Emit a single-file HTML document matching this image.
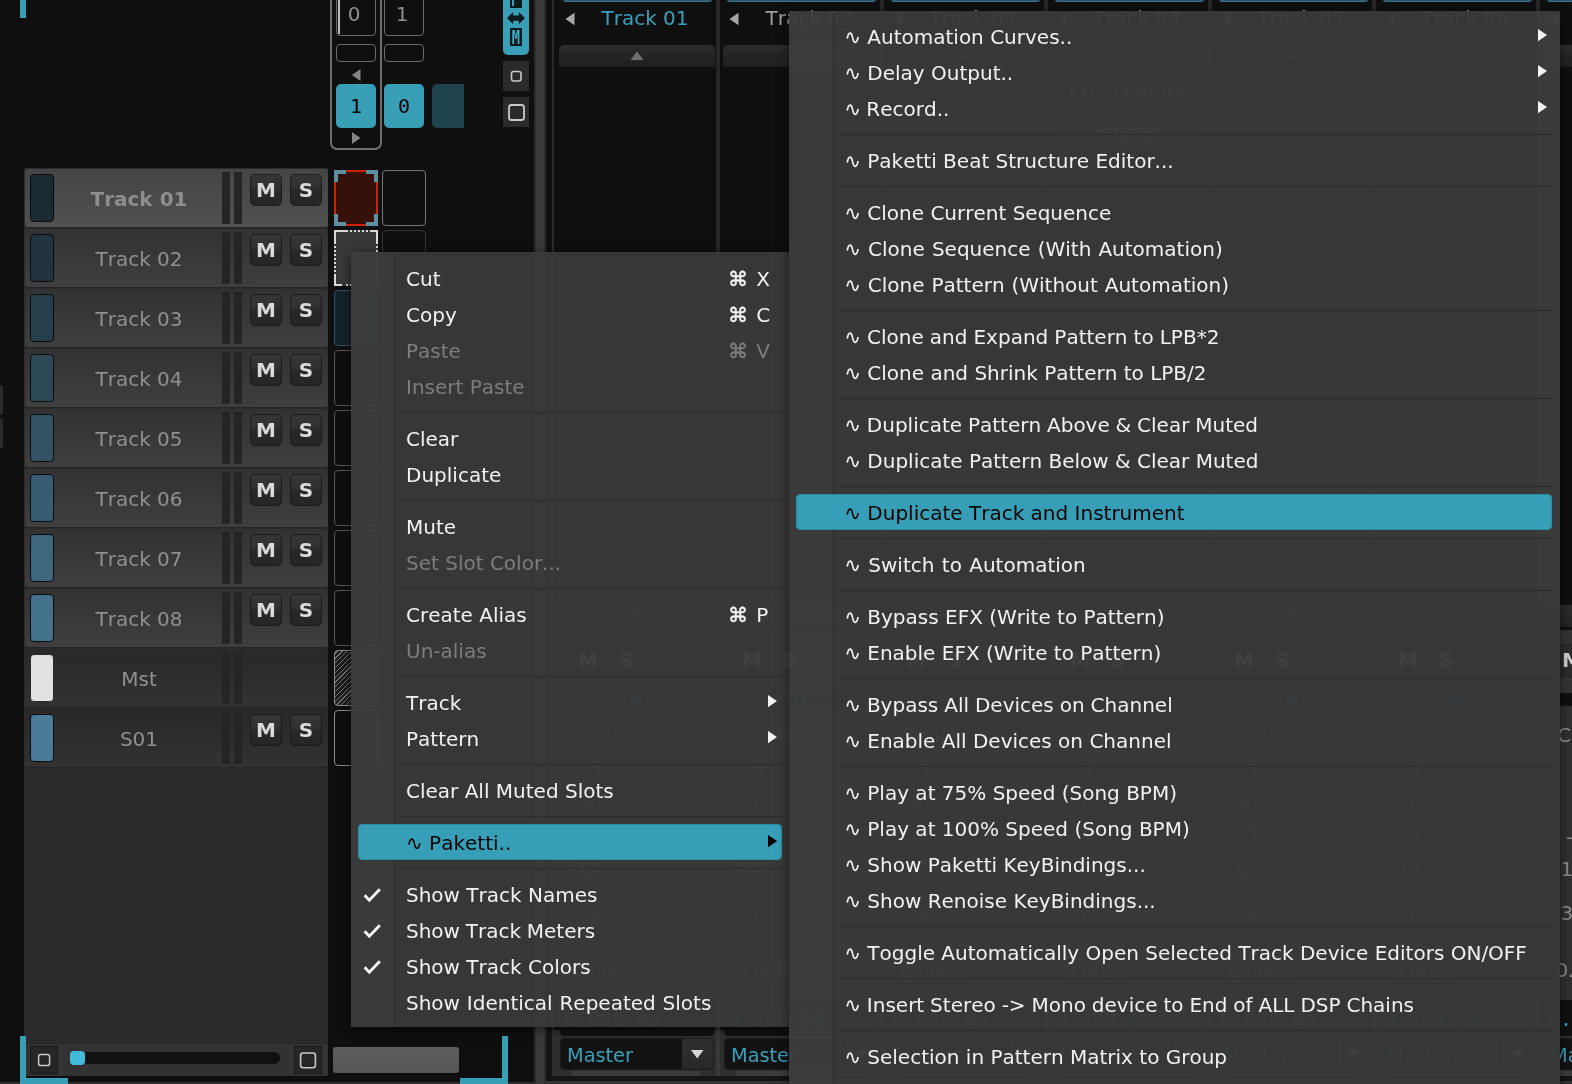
<!DOCTYPE html><html><head><meta charset="utf-8"><title>Renoise</title><style>
*{box-sizing:border-box}
html,body{margin:0;padding:0}
body{width:1572px;height:1084px;overflow:hidden;background:#0f0f0f;position:relative;
 font-family:"DejaVu Sans","Liberation Sans",sans-serif;font-size:20px;color:#eee;font-kerning:none}
.a{position:absolute}
.mono{font-family:"DejaVu Sans Mono","Liberation Mono",monospace}
.row{position:absolute;left:25px;width:303px;height:58px;border-radius:3px}
.row .sw{position:absolute;left:5px;top:5.4px;width:24px;height:48px;border:1px solid #0a0a0a;border-radius:4px}
.row .nm{position:absolute;left:30px;width:168px;top:12.4px;height:36px;line-height:36px;text-align:center;color:#909090;white-space:nowrap}
.row .mt{position:absolute;top:3.4px;width:8px;height:52px;background:repeating-linear-gradient(to bottom,#1f1f1f 0,#1f1f1f 1px,#2b2b2b 1px,#2b2b2b 2px)}
.btn{position:absolute;top:5.4px;width:32px;height:32px;border-radius:5px;border:1px solid #1b1b1b;
 background:linear-gradient(#363636,#2f2f2f 45%,#272727 55%,#272727);color:#dadada;font-weight:700;text-align:center;line-height:31px;font-size:20px}
.slot{position:absolute;width:44px;height:56px;border:1px solid #6a6a6a;border-radius:4px;background:#0f0f0f}
.menu{position:absolute;background:rgba(57,57,57,0.966);box-shadow:0 2px 10px rgba(0,0,0,.55)}
.menu .ic{position:absolute;left:0;top:0;bottom:0;background:rgba(255,255,255,0.02)}
.menu .vl{position:absolute;top:3px;bottom:3px;width:1px;background:#2b2b2b}
.mi{position:absolute;height:36px;line-height:36px;white-space:nowrap;color:#f2f2f2}
.mi.d{color:#7d7d7d}
.mi.h{color:#000}
.sep{position:absolute;height:1px;background:#2b2b2b}
.hl{position:absolute;height:35.6px;border-radius:4.5px;background:#369fb7;box-shadow:inset 0 0 0 1px rgba(0,30,40,0.14)}
.sc{position:absolute;height:36px;line-height:36px;white-space:nowrap;color:#f2f2f2;word-spacing:2px}
.sc b{font-weight:400;-webkit-text-stroke:0.45px currentColor}
.sc.d{color:#7d7d7d}
</style></head><body><div id="w" style="position:absolute;left:0;top:0;width:1572px;height:1084px;will-change:transform">
<div class="a" style="left:20px;top:0;width:6px;height:18px;background:#389fb6"></div>
<div class="a" style="left:0;top:385px;width:3px;height:30px;background:#2a2a2a;border-radius:0 2px 2px 0"></div>
<div class="a" style="left:0;top:418px;width:3px;height:30px;background:#2a2a2a;border-radius:0 2px 2px 0"></div>
<div class="a" style="left:330px;top:-10px;width:52px;height:160px;border:2px solid #6e6e6e;border-radius:7px"></div>
<div class="a" style="left:336px;top:-10px;width:40px;height:46px;border:1px solid #6a6a6a;border-radius:4px;color:#8f8f8f;text-align:center;line-height:46.5px;padding-right:4px">0</div>
<div class="a" style="left:336px;top:44px;width:40px;height:18px;border:1px solid #6a6a6a;border-radius:4px"></div>
<div class="a" style="left:384px;top:-10px;width:40px;height:46px;border:1px solid #6a6a6a;border-radius:4px;color:#8f8f8f;text-align:center;line-height:46.5px;padding-right:4px">1</div>
<div class="a" style="left:384px;top:44px;width:40px;height:18px;border:1px solid #6a6a6a;border-radius:4px"></div>
<div class="a" style="left:338px;top:0;width:2px;height:34px;background:#bdbdbd"></div>
<div class="a mono" style="left:336px;top:84px;width:40px;height:44px;border-radius:5px;background:#389fb6;color:#000;text-align:center;line-height:45px">1</div>
<div class="a mono" style="left:384px;top:84px;width:40px;height:44px;border-radius:5px;background:#389fb6;color:#000;text-align:center;line-height:45px">0</div>
<div class="a" style="left:432px;top:84px;width:32px;height:44px;border-radius:5px 0 0 5px;background:#1e434d"></div>
<div class="a" style="left:503px;top:-6px;width:26px;height:61px;border-radius:5px;background:#389fb6"></div>
<div class="a" style="left:510px;top:0;width:12px;height:8px;background:#09191d"></div>
<div class="a" style="left:512px;top:0;width:2px;height:6px;background:#389fb6"></div>
<div class="a" style="left:510px;top:28px;width:12px;height:18px;background:#09191d"></div>
<div class="a mono" style="left:510px;top:28px;width:12px;height:18px;color:#3fb0c8;font-size:19px;font-weight:700;line-height:18px;text-align:center;transform:scaleX(.72);">M</div>
<div class="a" style="left:503px;top:61px;width:26px;height:30px;background:#2b2b2b"></div>
<div class="a" style="left:503px;top:97px;width:26px;height:30px;background:#2b2b2b"></div>
<div class="a" style="left:534px;top:0;width:12px;height:1084px;background:linear-gradient(to right,#2c2c2c 0,#2c2c2c 2px,#3b3b3b 2px,#393939 10px,#2c2c2c 10px)"></div>
<div class="a" style="left:24px;top:168px;width:304px;height:908px;background:#2b2b2b"></div>
<div class="row" style="top:168.6px;background:linear-gradient(#454545,#4a4a4a 50%,#515151);box-shadow:0 1px 0 #242424">
<div class="sw" style="background:#1c2b33"></div>
<div class="nm" style="font-weight:700;color:#8e8e8e">Track 01</div>
<div class="mt" style="left:197px"></div><div class="mt" style="left:209px"></div>
<div class="btn" style="left:225px">M</div><div class="btn" style="left:265px">S</div>
</div>
<div class="row" style="top:228.6px;background:linear-gradient(#323232,#383838 50%,#3f3f3f);box-shadow:0 1px 0 #242424">
<div class="sw" style="background:#22343f"></div>
<div class="nm" style="">Track 02</div>
<div class="mt" style="left:197px"></div><div class="mt" style="left:209px"></div>
<div class="btn" style="left:225px">M</div><div class="btn" style="left:265px">S</div>
</div>
<div class="row" style="top:288.6px;background:linear-gradient(#323232,#383838 50%,#3f3f3f);box-shadow:0 1px 0 #242424">
<div class="sw" style="background:#273e4b"></div>
<div class="nm" style="">Track 03</div>
<div class="mt" style="left:197px"></div><div class="mt" style="left:209px"></div>
<div class="btn" style="left:225px">M</div><div class="btn" style="left:265px">S</div>
</div>
<div class="row" style="top:348.6px;background:linear-gradient(#323232,#383838 50%,#3f3f3f);box-shadow:0 1px 0 #242424">
<div class="sw" style="background:#2d4857"></div>
<div class="nm" style="">Track 04</div>
<div class="mt" style="left:197px"></div><div class="mt" style="left:209px"></div>
<div class="btn" style="left:225px">M</div><div class="btn" style="left:265px">S</div>
</div>
<div class="row" style="top:408.6px;background:linear-gradient(#323232,#383838 50%,#3f3f3f);box-shadow:0 1px 0 #242424">
<div class="sw" style="background:#335365"></div>
<div class="nm" style="">Track 05</div>
<div class="mt" style="left:197px"></div><div class="mt" style="left:209px"></div>
<div class="btn" style="left:225px">M</div><div class="btn" style="left:265px">S</div>
</div>
<div class="row" style="top:468.6px;background:linear-gradient(#323232,#383838 50%,#3f3f3f);box-shadow:0 1px 0 #242424">
<div class="sw" style="background:#385d72"></div>
<div class="nm" style="">Track 06</div>
<div class="mt" style="left:197px"></div><div class="mt" style="left:209px"></div>
<div class="btn" style="left:225px">M</div><div class="btn" style="left:265px">S</div>
</div>
<div class="row" style="top:528.6px;background:linear-gradient(#323232,#383838 50%,#3f3f3f);box-shadow:0 1px 0 #242424">
<div class="sw" style="background:#3e677f"></div>
<div class="nm" style="">Track 07</div>
<div class="mt" style="left:197px"></div><div class="mt" style="left:209px"></div>
<div class="btn" style="left:225px">M</div><div class="btn" style="left:265px">S</div>
</div>
<div class="row" style="top:588.6px;background:linear-gradient(#323232,#383838 50%,#3f3f3f);box-shadow:0 1px 0 #242424">
<div class="sw" style="background:#44718b"></div>
<div class="nm" style="">Track 08</div>
<div class="mt" style="left:197px"></div><div class="mt" style="left:209px"></div>
<div class="btn" style="left:225px">M</div><div class="btn" style="left:265px">S</div>
</div>
<div class="row" style="top:648.6px;background:linear-gradient(#292929,#2d2d2d 50%,#323232);box-shadow:0 1px 0 #242424">
<div class="sw" style="background:#e2e2e2;border-color:#2a2a2a"></div>
<div class="nm" style="">Mst</div>
<div class="mt" style="left:197px"></div><div class="mt" style="left:209px"></div>
</div>
<div class="row" style="top:708.6px;background:linear-gradient(#292929,#2d2d2d 50%,#323232);box-shadow:0 1px 0 #242424">
<div class="sw" style="background:#4a7c9a"></div>
<div class="nm" style="">S01</div>
<div class="mt" style="left:197px"></div><div class="mt" style="left:209px"></div>
<div class="btn" style="left:225px">M</div><div class="btn" style="left:265px">S</div>
</div>
<div class="a" style="left:24px;top:1044px;width:304px;height:32px;background:#323232"></div>
<div class="a" style="left:30px;top:1046px;width:28px;height:28px;background:#262626;border:1px solid #1a1a1a"></div>
<div class="a" style="left:294px;top:1046px;width:28px;height:28px;background:#262626;border:1px solid #1a1a1a"></div>
<div class="a" style="left:70px;top:1052px;width:210px;height:12px;border-radius:6px;background:#111"></div>
<div class="a" style="left:70px;top:1051px;width:15px;height:14px;border-radius:4px;background:#41bcd8"></div>
<div class="a" style="left:333px;top:1047px;width:126px;height:26px;border-radius:3px;background:linear-gradient(#5f5f5f,#555)"></div>
<div class="a" style="left:20px;top:1036px;width:6px;height:48px;background:#389fb6"></div>
<div class="a" style="left:20px;top:1078px;width:48px;height:6px;background:#389fb6"></div>
<div class="a" style="left:502px;top:1036px;width:6px;height:48px;background:#389fb6"></div>
<div class="a" style="left:460px;top:1078px;width:48px;height:6px;background:#389fb6"></div>
<div class="a" style="left:334px;top:170px;width:44px;height:56px;background:#36110a;border:2px solid #cc2200"></div>
<div class="a" style="left:334px;top:230px;width:44px;height:56px;background:#383838"></div>
<div class="slot" style="left:334px;top:290px;background:#13232c;border-color:#35505e"></div>
<div class="slot" style="left:334px;top:350px;border-color:#555"></div>
<div class="slot" style="left:334px;top:410px;border-color:#555"></div>
<div class="slot" style="left:334px;top:470px;border-color:#555"></div>
<div class="slot" style="left:334px;top:530px;border-color:#555"></div>
<div class="slot" style="left:334px;top:590px;border-color:#555"></div>
<div class="slot" style="left:334px;top:650px;border-color:#8a8a8a;background:repeating-linear-gradient(135deg,#1c1c1c 0,#1c1c1c 1.4px,#707070 1.4px,#707070 2.3px,#1c1c1c 2.3px,#1c1c1c 3.4px)"></div>
<div class="slot" style="left:334px;top:710px;border-color:#8a8a8a"></div>
<div class="slot" style="left:382px;top:170px;border-color:#777"></div>
<div class="slot" style="left:382px;top:230px;border-color:#333"></div>
<div class="a" style="left:0;top:1082px;width:534px;height:2px;background:#2c2c2c"></div>
<div class="a" style="left:20px;top:1078px;width:48px;height:6px;background:#389fb6"></div>
<div class="a" style="left:460px;top:1078px;width:48px;height:6px;background:#389fb6"></div>
<div class="a" style="left:552px;top:0;width:2px;height:1076px;background:#2a2a2a"></div>
<div class="a" style="left:546px;top:1030px;width:1026px;height:51px;background:#151515;border-radius:0 0 0 8px"></div>
<div class="a" style="left:546px;top:1081px;width:1026px;height:3px;background:#333"></div>
<div class="a" style="left:552px;top:1030px;width:1020px;height:46px;background:#2e2e2e"></div>
<div class="a" style="left:716px;top:0;width:4px;height:605px;background:#272727"></div>
<div class="a" style="left:716px;top:605px;width:4px;height:471px;background:#383838"></div>
<div class="a" style="left:563px;top:-2px;width:149px;height:4px;background:#2d566d;border-bottom:1px solid #3f7391;border-radius:0 0 3px 3px"></div>
<div class="a" style="left:574px;top:0;width:142px;height:36px;line-height:36px;text-align:center;color:#3aa0ba;white-space:nowrap">Track 01</div>
<div class="a" style="left:559px;top:45px;width:156px;height:22px;border-radius:5px 5px 0 0;background:linear-gradient(#2d2d2d,#262626 40%,#1f1f1f)"></div>
<div class="a" style="left:552px;top:605px;width:164px;height:22px;background:linear-gradient(#2c2c2c,#222)"></div>
<div class="a" style="left:552px;top:630px;width:164px;height:76px;background:#333"></div>
<div class="a" style="left:552px;top:706px;width:164px;height:294px;background:#303030"></div>
<div class="a" style="left:572px;top:644px;width:34px;height:33px;background:#2c2c2c;border:1px solid #242424;color:#cfcfcf;font-weight:700;text-align:center;line-height:31px;text-indent:-2px">M</div>
<div class="a" style="left:610px;top:644px;width:34px;height:33px;background:#2c2c2c;border:1px solid #242424;color:#cfcfcf;font-weight:700;text-align:center;line-height:31px;text-indent:-2px">S</div>
<div class="a" style="left:572px;top:693px;width:132px;height:13px;background:#0f0f0f;border-radius:3px"></div>
<div class="a" style="left:629.5px;top:692.5px;width:13.5px;height:14px;border-radius:4px;background:#1e434d"></div>
<div class="a" style="left:573px;top:717px;height:36px;line-height:36px;color:#8a8a8a">Center</div>
<div class="a" style="left:674px;top:723px;width:19px;height:18px;border:1px solid #262626;border-radius:3px;background:#2b2b2b"></div>
<div class="a" style="left:532px;top:755px;width:70px;text-align:right;height:36px;line-height:36px;color:#888">3</div>
<div class="a" style="left:532px;top:788px;width:70px;text-align:right;height:36px;line-height:36px;color:#888">0</div>
<div class="a" style="left:532px;top:819px;width:70px;text-align:right;height:36px;line-height:36px;color:#888">-3</div>
<div class="a" style="left:532px;top:851px;width:70px;text-align:right;height:36px;line-height:36px;color:#888">-12</div>
<div class="a" style="left:532px;top:895px;width:70px;text-align:right;height:36px;line-height:36px;color:#888">-36</div>
<div class="a" style="left:571.5px;top:952px;height:36px;line-height:36px;color:#888;letter-spacing:-0.8px">0.000..</div>
<div class="a" style="left:617px;top:765px;width:9px;height:180px;background:#262626"></div>
<div class="a" style="left:560px;top:1003px;width:154px;height:33px;border-radius:4px;background:#111"></div>
<div class="a mono" style="left:564px;top:1001px;height:36px;line-height:36px;color:#3aa0ba">0.000 ms</div>
<div class="a" style="left:560px;top:1038px;width:154px;height:32px;border-radius:4px;background:#121212;border:1px solid #1c1c1c;overflow:hidden"><div class="a" style="left:121px;top:0;width:32px;height:32px;background:linear-gradient(#303030,#282828)"></div><div class="a" style="left:6px;top:-1.5px;height:36px;line-height:36px;color:#3aa0ba;font-size:19.3px">Master</div></div>
<div class="a" style="left:572px;top:1071px;width:128px;height:5px;background:#3c3c3c"></div>
<div class="a" style="left:880px;top:0;width:4px;height:605px;background:#272727"></div>
<div class="a" style="left:880px;top:605px;width:4px;height:471px;background:#383838"></div>
<div class="a" style="left:727px;top:-2px;width:149px;height:4px;background:#2d566d;border-bottom:1px solid #3f7391;border-radius:0 0 3px 3px"></div>
<div class="a" style="left:738px;top:0;width:142px;height:36px;line-height:36px;text-align:center;color:#9c9c9c;white-space:nowrap">Track 02</div>
<div class="a" style="left:723px;top:45px;width:156px;height:22px;border-radius:5px 5px 0 0;background:linear-gradient(#2d2d2d,#262626 40%,#1f1f1f)"></div>
<div class="a" style="left:716px;top:605px;width:164px;height:22px;background:linear-gradient(#2c2c2c,#222)"></div>
<div class="a" style="left:716px;top:630px;width:164px;height:76px;background:#333"></div>
<div class="a" style="left:716px;top:706px;width:164px;height:294px;background:#303030"></div>
<div class="a" style="left:736px;top:644px;width:34px;height:33px;background:#2c2c2c;border:1px solid #242424;color:#cfcfcf;font-weight:700;text-align:center;line-height:31px;text-indent:-2px">M</div>
<div class="a" style="left:774px;top:644px;width:34px;height:33px;background:#2c2c2c;border:1px solid #242424;color:#cfcfcf;font-weight:700;text-align:center;line-height:31px;text-indent:-2px">S</div>
<div class="a" style="left:736px;top:693px;width:132px;height:13px;background:#0f0f0f;border-radius:3px"></div>
<div class="a" style="left:793.5px;top:692.5px;width:13.5px;height:14px;border-radius:4px;background:#1e434d"></div>
<div class="a" style="left:737px;top:717px;height:36px;line-height:36px;color:#8a8a8a">Center</div>
<div class="a" style="left:838px;top:723px;width:19px;height:18px;border:1px solid #262626;border-radius:3px;background:#2b2b2b"></div>
<div class="a" style="left:696px;top:755px;width:70px;text-align:right;height:36px;line-height:36px;color:#888">3</div>
<div class="a" style="left:696px;top:788px;width:70px;text-align:right;height:36px;line-height:36px;color:#888">0</div>
<div class="a" style="left:696px;top:819px;width:70px;text-align:right;height:36px;line-height:36px;color:#888">-3</div>
<div class="a" style="left:696px;top:851px;width:70px;text-align:right;height:36px;line-height:36px;color:#888">-12</div>
<div class="a" style="left:696px;top:895px;width:70px;text-align:right;height:36px;line-height:36px;color:#888">-36</div>
<div class="a" style="left:735.5px;top:952px;height:36px;line-height:36px;color:#888;letter-spacing:-0.8px">0.000..</div>
<div class="a" style="left:781px;top:765px;width:9px;height:180px;background:#262626"></div>
<div class="a" style="left:724px;top:1003px;width:154px;height:33px;border-radius:4px;background:#111"></div>
<div class="a mono" style="left:728px;top:1001px;height:36px;line-height:36px;color:#3aa0ba">0.000 ms</div>
<div class="a" style="left:724px;top:1038px;width:154px;height:32px;border-radius:4px;background:#121212;border:1px solid #1c1c1c;overflow:hidden"><div class="a" style="left:121px;top:0;width:32px;height:32px;background:linear-gradient(#303030,#282828)"></div><div class="a" style="left:6px;top:-1.5px;height:36px;line-height:36px;color:#3aa0ba;font-size:19.3px">Master</div></div>
<div class="a" style="left:736px;top:1071px;width:128px;height:5px;background:#3c3c3c"></div>
<div class="a" style="left:1044px;top:0;width:4px;height:605px;background:#272727"></div>
<div class="a" style="left:1044px;top:605px;width:4px;height:471px;background:#383838"></div>
<div class="a" style="left:891px;top:-2px;width:149px;height:4px;background:#2d566d;border-bottom:1px solid #3f7391;border-radius:0 0 3px 3px"></div>
<div class="a" style="left:902px;top:0;width:142px;height:36px;line-height:36px;text-align:center;color:#9c9c9c;white-space:nowrap">Track 03</div>
<div class="a" style="left:887px;top:45px;width:156px;height:22px;border-radius:5px 5px 0 0;background:linear-gradient(#2d2d2d,#262626 40%,#1f1f1f)"></div>
<div class="a" style="left:880px;top:605px;width:164px;height:22px;background:linear-gradient(#2c2c2c,#222)"></div>
<div class="a" style="left:880px;top:630px;width:164px;height:76px;background:#333"></div>
<div class="a" style="left:880px;top:706px;width:164px;height:294px;background:#303030"></div>
<div class="a" style="left:900px;top:644px;width:34px;height:33px;background:#2c2c2c;border:1px solid #242424;color:#cfcfcf;font-weight:700;text-align:center;line-height:31px;text-indent:-2px">M</div>
<div class="a" style="left:938px;top:644px;width:34px;height:33px;background:#2c2c2c;border:1px solid #242424;color:#cfcfcf;font-weight:700;text-align:center;line-height:31px;text-indent:-2px">S</div>
<div class="a" style="left:900px;top:693px;width:132px;height:13px;background:#0f0f0f;border-radius:3px"></div>
<div class="a" style="left:957.5px;top:692.5px;width:13.5px;height:14px;border-radius:4px;background:#1e434d"></div>
<div class="a" style="left:901px;top:717px;height:36px;line-height:36px;color:#8a8a8a">Center</div>
<div class="a" style="left:1002px;top:723px;width:19px;height:18px;border:1px solid #262626;border-radius:3px;background:#2b2b2b"></div>
<div class="a" style="left:860px;top:755px;width:70px;text-align:right;height:36px;line-height:36px;color:#888">3</div>
<div class="a" style="left:860px;top:788px;width:70px;text-align:right;height:36px;line-height:36px;color:#888">0</div>
<div class="a" style="left:860px;top:819px;width:70px;text-align:right;height:36px;line-height:36px;color:#888">-3</div>
<div class="a" style="left:860px;top:851px;width:70px;text-align:right;height:36px;line-height:36px;color:#888">-12</div>
<div class="a" style="left:860px;top:895px;width:70px;text-align:right;height:36px;line-height:36px;color:#888">-36</div>
<div class="a" style="left:899.5px;top:952px;height:36px;line-height:36px;color:#888;letter-spacing:-0.8px">0.000..</div>
<div class="a" style="left:945px;top:765px;width:9px;height:180px;background:#262626"></div>
<div class="a" style="left:888px;top:1003px;width:154px;height:33px;border-radius:4px;background:#111"></div>
<div class="a mono" style="left:892px;top:1001px;height:36px;line-height:36px;color:#3aa0ba">0.000 ms</div>
<div class="a" style="left:888px;top:1038px;width:154px;height:32px;border-radius:4px;background:#121212;border:1px solid #1c1c1c;overflow:hidden"><div class="a" style="left:121px;top:0;width:32px;height:32px;background:linear-gradient(#303030,#282828)"></div><div class="a" style="left:6px;top:-1.5px;height:36px;line-height:36px;color:#3aa0ba;font-size:19.3px">Master</div></div>
<div class="a" style="left:900px;top:1071px;width:128px;height:5px;background:#3c3c3c"></div>
<div class="a" style="left:1208px;top:0;width:4px;height:605px;background:#272727"></div>
<div class="a" style="left:1208px;top:605px;width:4px;height:471px;background:#383838"></div>
<div class="a" style="left:1055px;top:-2px;width:149px;height:4px;background:#2d566d;border-bottom:1px solid #3f7391;border-radius:0 0 3px 3px"></div>
<div class="a" style="left:1066px;top:0;width:142px;height:36px;line-height:36px;text-align:center;color:#9c9c9c;white-space:nowrap">Track 04</div>
<div class="a" style="left:1051px;top:45px;width:156px;height:22px;border-radius:5px 5px 0 0;background:linear-gradient(#2d2d2d,#262626 40%,#1f1f1f)"></div>
<div class="a" style="left:1044px;top:605px;width:164px;height:22px;background:linear-gradient(#2c2c2c,#222)"></div>
<div class="a" style="left:1044px;top:630px;width:164px;height:76px;background:#333"></div>
<div class="a" style="left:1044px;top:706px;width:164px;height:294px;background:#303030"></div>
<div class="a" style="left:1064px;top:644px;width:34px;height:33px;background:#2c2c2c;border:1px solid #242424;color:#cfcfcf;font-weight:700;text-align:center;line-height:31px;text-indent:-2px">M</div>
<div class="a" style="left:1102px;top:644px;width:34px;height:33px;background:#2c2c2c;border:1px solid #242424;color:#cfcfcf;font-weight:700;text-align:center;line-height:31px;text-indent:-2px">S</div>
<div class="a" style="left:1064px;top:693px;width:132px;height:13px;background:#0f0f0f;border-radius:3px"></div>
<div class="a" style="left:1121.5px;top:692.5px;width:13.5px;height:14px;border-radius:4px;background:#1e434d"></div>
<div class="a" style="left:1065px;top:717px;height:36px;line-height:36px;color:#8a8a8a">Center</div>
<div class="a" style="left:1166px;top:723px;width:19px;height:18px;border:1px solid #262626;border-radius:3px;background:#2b2b2b"></div>
<div class="a" style="left:1024px;top:755px;width:70px;text-align:right;height:36px;line-height:36px;color:#888">3</div>
<div class="a" style="left:1024px;top:788px;width:70px;text-align:right;height:36px;line-height:36px;color:#888">0</div>
<div class="a" style="left:1024px;top:819px;width:70px;text-align:right;height:36px;line-height:36px;color:#888">-3</div>
<div class="a" style="left:1024px;top:851px;width:70px;text-align:right;height:36px;line-height:36px;color:#888">-12</div>
<div class="a" style="left:1024px;top:895px;width:70px;text-align:right;height:36px;line-height:36px;color:#888">-36</div>
<div class="a" style="left:1063.5px;top:952px;height:36px;line-height:36px;color:#888;letter-spacing:-0.8px">0.000..</div>
<div class="a" style="left:1109px;top:765px;width:9px;height:180px;background:#262626"></div>
<div class="a" style="left:1052px;top:1003px;width:154px;height:33px;border-radius:4px;background:#111"></div>
<div class="a mono" style="left:1056px;top:1001px;height:36px;line-height:36px;color:#3aa0ba">0.000 ms</div>
<div class="a" style="left:1052px;top:1038px;width:154px;height:32px;border-radius:4px;background:#121212;border:1px solid #1c1c1c;overflow:hidden"><div class="a" style="left:121px;top:0;width:32px;height:32px;background:linear-gradient(#303030,#282828)"></div><div class="a" style="left:6px;top:-1.5px;height:36px;line-height:36px;color:#3aa0ba;font-size:19.3px">Master</div></div>
<div class="a" style="left:1064px;top:1071px;width:128px;height:5px;background:#3c3c3c"></div>
<div class="a" style="left:1372px;top:0;width:4px;height:605px;background:#272727"></div>
<div class="a" style="left:1372px;top:605px;width:4px;height:471px;background:#383838"></div>
<div class="a" style="left:1219px;top:-2px;width:149px;height:4px;background:#2d566d;border-bottom:1px solid #3f7391;border-radius:0 0 3px 3px"></div>
<div class="a" style="left:1230px;top:0;width:142px;height:36px;line-height:36px;text-align:center;color:#9c9c9c;white-space:nowrap">Track 05</div>
<div class="a" style="left:1215px;top:45px;width:156px;height:22px;border-radius:5px 5px 0 0;background:linear-gradient(#2d2d2d,#262626 40%,#1f1f1f)"></div>
<div class="a" style="left:1208px;top:605px;width:164px;height:22px;background:linear-gradient(#2c2c2c,#222)"></div>
<div class="a" style="left:1208px;top:630px;width:164px;height:76px;background:#333"></div>
<div class="a" style="left:1208px;top:706px;width:164px;height:294px;background:#303030"></div>
<div class="a" style="left:1228px;top:644px;width:34px;height:33px;background:#2c2c2c;border:1px solid #242424;color:#cfcfcf;font-weight:700;text-align:center;line-height:31px;text-indent:-2px">M</div>
<div class="a" style="left:1266px;top:644px;width:34px;height:33px;background:#2c2c2c;border:1px solid #242424;color:#cfcfcf;font-weight:700;text-align:center;line-height:31px;text-indent:-2px">S</div>
<div class="a" style="left:1228px;top:693px;width:132px;height:13px;background:#0f0f0f;border-radius:3px"></div>
<div class="a" style="left:1285.5px;top:692.5px;width:13.5px;height:14px;border-radius:4px;background:#1e434d"></div>
<div class="a" style="left:1229px;top:717px;height:36px;line-height:36px;color:#8a8a8a">Center</div>
<div class="a" style="left:1330px;top:723px;width:19px;height:18px;border:1px solid #262626;border-radius:3px;background:#2b2b2b"></div>
<div class="a" style="left:1188px;top:755px;width:70px;text-align:right;height:36px;line-height:36px;color:#888">3</div>
<div class="a" style="left:1188px;top:788px;width:70px;text-align:right;height:36px;line-height:36px;color:#888">0</div>
<div class="a" style="left:1188px;top:819px;width:70px;text-align:right;height:36px;line-height:36px;color:#888">-3</div>
<div class="a" style="left:1188px;top:851px;width:70px;text-align:right;height:36px;line-height:36px;color:#888">-12</div>
<div class="a" style="left:1188px;top:895px;width:70px;text-align:right;height:36px;line-height:36px;color:#888">-36</div>
<div class="a" style="left:1227.5px;top:952px;height:36px;line-height:36px;color:#888;letter-spacing:-0.8px">0.000..</div>
<div class="a" style="left:1273px;top:765px;width:9px;height:180px;background:#262626"></div>
<div class="a" style="left:1216px;top:1003px;width:154px;height:33px;border-radius:4px;background:#111"></div>
<div class="a mono" style="left:1220px;top:1001px;height:36px;line-height:36px;color:#3aa0ba">0.000 ms</div>
<div class="a" style="left:1216px;top:1038px;width:154px;height:32px;border-radius:4px;background:#121212;border:1px solid #1c1c1c;overflow:hidden"><div class="a" style="left:121px;top:0;width:32px;height:32px;background:linear-gradient(#303030,#282828)"></div><div class="a" style="left:6px;top:-1.5px;height:36px;line-height:36px;color:#3aa0ba;font-size:19.3px">Master</div></div>
<div class="a" style="left:1228px;top:1071px;width:128px;height:5px;background:#3c3c3c"></div>
<div class="a" style="left:1536px;top:0;width:4px;height:605px;background:#272727"></div>
<div class="a" style="left:1536px;top:605px;width:4px;height:471px;background:#383838"></div>
<div class="a" style="left:1383px;top:-2px;width:149px;height:4px;background:#2d566d;border-bottom:1px solid #3f7391;border-radius:0 0 3px 3px"></div>
<div class="a" style="left:1394px;top:0;width:142px;height:36px;line-height:36px;text-align:center;color:#9c9c9c;white-space:nowrap">Track 06</div>
<div class="a" style="left:1379px;top:45px;width:156px;height:22px;border-radius:5px 5px 0 0;background:linear-gradient(#2d2d2d,#262626 40%,#1f1f1f)"></div>
<div class="a" style="left:1372px;top:605px;width:164px;height:22px;background:linear-gradient(#2c2c2c,#222)"></div>
<div class="a" style="left:1372px;top:630px;width:164px;height:76px;background:#333"></div>
<div class="a" style="left:1372px;top:706px;width:164px;height:294px;background:#303030"></div>
<div class="a" style="left:1392px;top:644px;width:34px;height:33px;background:#2c2c2c;border:1px solid #242424;color:#cfcfcf;font-weight:700;text-align:center;line-height:31px;text-indent:-2px">M</div>
<div class="a" style="left:1430px;top:644px;width:34px;height:33px;background:#2c2c2c;border:1px solid #242424;color:#cfcfcf;font-weight:700;text-align:center;line-height:31px;text-indent:-2px">S</div>
<div class="a" style="left:1392px;top:693px;width:132px;height:13px;background:#0f0f0f;border-radius:3px"></div>
<div class="a" style="left:1449.5px;top:692.5px;width:13.5px;height:14px;border-radius:4px;background:#1e434d"></div>
<div class="a" style="left:1393px;top:717px;height:36px;line-height:36px;color:#8a8a8a">Center</div>
<div class="a" style="left:1494px;top:723px;width:19px;height:18px;border:1px solid #262626;border-radius:3px;background:#2b2b2b"></div>
<div class="a" style="left:1352px;top:755px;width:70px;text-align:right;height:36px;line-height:36px;color:#888">3</div>
<div class="a" style="left:1352px;top:788px;width:70px;text-align:right;height:36px;line-height:36px;color:#888">0</div>
<div class="a" style="left:1352px;top:819px;width:70px;text-align:right;height:36px;line-height:36px;color:#888">-3</div>
<div class="a" style="left:1352px;top:851px;width:70px;text-align:right;height:36px;line-height:36px;color:#888">-12</div>
<div class="a" style="left:1352px;top:895px;width:70px;text-align:right;height:36px;line-height:36px;color:#888">-36</div>
<div class="a" style="left:1391.5px;top:952px;height:36px;line-height:36px;color:#888;letter-spacing:-0.8px">0.000..</div>
<div class="a" style="left:1437px;top:765px;width:9px;height:180px;background:#262626"></div>
<div class="a" style="left:1380px;top:1003px;width:154px;height:33px;border-radius:4px;background:#111"></div>
<div class="a mono" style="left:1384px;top:1001px;height:36px;line-height:36px;color:#3aa0ba">0.000 ms</div>
<div class="a" style="left:1380px;top:1038px;width:154px;height:32px;border-radius:4px;background:#121212;border:1px solid #1c1c1c;overflow:hidden"><div class="a" style="left:121px;top:0;width:32px;height:32px;background:linear-gradient(#303030,#282828)"></div><div class="a" style="left:6px;top:-1.5px;height:36px;line-height:36px;color:#3aa0ba;font-size:19.3px">Master</div></div>
<div class="a" style="left:1392px;top:1071px;width:128px;height:5px;background:#3c3c3c"></div>
<div class="a" style="left:1700px;top:0;width:4px;height:605px;background:#272727"></div>
<div class="a" style="left:1700px;top:605px;width:4px;height:471px;background:#383838"></div>
<div class="a" style="left:1547px;top:-2px;width:149px;height:4px;background:#2d566d;border-bottom:1px solid #3f7391;border-radius:0 0 3px 3px"></div>
<div class="a" style="left:1558px;top:0;width:142px;height:36px;line-height:36px;text-align:center;color:#9c9c9c;white-space:nowrap">Track 07</div>
<div class="a" style="left:1543px;top:45px;width:156px;height:22px;border-radius:5px 5px 0 0;background:linear-gradient(#2d2d2d,#262626 40%,#1f1f1f)"></div>
<div class="a" style="left:1536px;top:605px;width:164px;height:22px;background:linear-gradient(#2c2c2c,#222)"></div>
<div class="a" style="left:1536px;top:630px;width:164px;height:76px;background:#333"></div>
<div class="a" style="left:1536px;top:706px;width:164px;height:294px;background:#303030"></div>
<div class="a" style="left:1556px;top:644px;width:34px;height:33px;background:#2c2c2c;border:1px solid #242424;color:#cfcfcf;font-weight:700;text-align:center;line-height:31px;text-indent:-2px">M</div>
<div class="a" style="left:1594px;top:644px;width:34px;height:33px;background:#2c2c2c;border:1px solid #242424;color:#cfcfcf;font-weight:700;text-align:center;line-height:31px;text-indent:-2px">S</div>
<div class="a" style="left:1556px;top:693px;width:132px;height:13px;background:#0f0f0f;border-radius:3px"></div>
<div class="a" style="left:1613.5px;top:692.5px;width:13.5px;height:14px;border-radius:4px;background:#1e434d"></div>
<div class="a" style="left:1557px;top:717px;height:36px;line-height:36px;color:#8a8a8a">Center</div>
<div class="a" style="left:1658px;top:723px;width:19px;height:18px;border:1px solid #262626;border-radius:3px;background:#2b2b2b"></div>
<div class="a" style="left:1516px;top:755px;width:70px;text-align:right;height:36px;line-height:36px;color:#888">3</div>
<div class="a" style="left:1516px;top:788px;width:70px;text-align:right;height:36px;line-height:36px;color:#888">0</div>
<div class="a" style="left:1516px;top:819px;width:70px;text-align:right;height:36px;line-height:36px;color:#888">-3</div>
<div class="a" style="left:1516px;top:851px;width:70px;text-align:right;height:36px;line-height:36px;color:#888">-12</div>
<div class="a" style="left:1516px;top:895px;width:70px;text-align:right;height:36px;line-height:36px;color:#888">-36</div>
<div class="a" style="left:1555.5px;top:952px;height:36px;line-height:36px;color:#888;letter-spacing:-0.8px">0.000..</div>
<div class="a" style="left:1601px;top:765px;width:9px;height:180px;background:#262626"></div>
<div class="a" style="left:1544px;top:1003px;width:154px;height:33px;border-radius:4px;background:#111"></div>
<div class="a mono" style="left:1548px;top:1001px;height:36px;line-height:36px;color:#3aa0ba">0.000 ms</div>
<div class="a" style="left:1544px;top:1038px;width:154px;height:32px;border-radius:4px;background:#121212;border:1px solid #1c1c1c;overflow:hidden"><div class="a" style="left:121px;top:0;width:32px;height:32px;background:linear-gradient(#303030,#282828)"></div><div class="a" style="left:6px;top:-1.5px;height:36px;line-height:36px;color:#3aa0ba;font-size:19.3px">Master</div></div>
<div class="a" style="left:1556px;top:1071px;width:128px;height:5px;background:#3c3c3c"></div>
<div class="a" style="left:1052px;top:73px;width:152px;height:36px;line-height:36px;text-align:center;color:#9a9a9a;background:#1b1b1b">kHs Flanger</div>
<div class="a" style="left:1052px;top:113px;width:152px;height:36px;line-height:36px;text-align:center;color:#9a9a9a;background:#1b1b1b">Spacer</div>
<svg class="a" style="left:0;top:0" width="1572" height="1084" viewBox="0 0 1572 1084"><polygon points="360.5,69 360.5,81 352,75.0" fill="#858585"/><polygon points="352,132 352,144 360.5,138.0" fill="#858585"/><polygon points="574.5,12.8 574.5,25.200000000000003 565.5,19.0" fill="#a8a8a8"/><polygon points="630.5,60.0 643.5,60.0 637.0,51.5" fill="#6e6e6e"/><polygon points="691,1050 703.5,1050 697.25,1058.5" fill="#d6d6d6"/><polygon points="631,611.5 643,611.5 637.0,619.0" fill="#5a5a5a"/><polygon points="738.5,12.8 738.5,25.200000000000003 729.5,19.0" fill="#a8a8a8"/><polygon points="794.5,60.0 807.5,60.0 801.0,51.5" fill="#6e6e6e"/><polygon points="855,1050 867.5,1050 861.25,1058.5" fill="#d6d6d6"/><polygon points="795,611.5 807,611.5 801.0,619.0" fill="#5a5a5a"/><polygon points="902.5,12.8 902.5,25.200000000000003 893.5,19.0" fill="#a8a8a8"/><polygon points="958.5,60.0 971.5,60.0 965.0,51.5" fill="#6e6e6e"/><polygon points="1019,1050 1031.5,1050 1025.25,1058.5" fill="#d6d6d6"/><polygon points="959,611.5 971,611.5 965.0,619.0" fill="#5a5a5a"/><polygon points="1066.5,12.8 1066.5,25.200000000000003 1057.5,19.0" fill="#a8a8a8"/><polygon points="1122.5,60.0 1135.5,60.0 1129.0,51.5" fill="#6e6e6e"/><polygon points="1183,1050 1195.5,1050 1189.25,1058.5" fill="#d6d6d6"/><polygon points="1123,611.5 1135,611.5 1129.0,619.0" fill="#5a5a5a"/><polygon points="1230.5,12.8 1230.5,25.200000000000003 1221.5,19.0" fill="#a8a8a8"/><polygon points="1286.5,60.0 1299.5,60.0 1293.0,51.5" fill="#6e6e6e"/><polygon points="1347,1050 1359.5,1050 1353.25,1058.5" fill="#d6d6d6"/><polygon points="1287,611.5 1299,611.5 1293.0,619.0" fill="#5a5a5a"/><polygon points="1394.5,12.8 1394.5,25.200000000000003 1385.5,19.0" fill="#a8a8a8"/><polygon points="1450.5,60.0 1463.5,60.0 1457.0,51.5" fill="#6e6e6e"/><polygon points="1511,1050 1523.5,1050 1517.25,1058.5" fill="#d6d6d6"/><polygon points="1451,611.5 1463,611.5 1457.0,619.0" fill="#5a5a5a"/><polygon points="1558.5,12.8 1558.5,25.200000000000003 1549.5,19.0" fill="#a8a8a8"/><polygon points="1614.5,60.0 1627.5,60.0 1621.0,51.5" fill="#6e6e6e"/><polygon points="1675,1050 1687.5,1050 1681.25,1058.5" fill="#d6d6d6"/><polygon points="1615,611.5 1627,611.5 1621.0,619.0" fill="#5a5a5a"/><polygon points="507,18 513.2,12 513.2,15.4 518.8,15.4 518.8,12 525,18 518.8,24.2 518.8,20.8 513.2,20.8 513.2,24.2" fill="#09191d"/><rect x="511.5" y="71.5" width="9.5" height="9.5" rx="2.2" fill="none" stroke="#c9c9c9" stroke-width="1.6"/><rect x="509" y="105" width="15" height="15" rx="2.5" fill="none" stroke="#c9c9c9" stroke-width="1.8"/><rect x="38.6" y="1054.6" width="11" height="11" rx="2.2" fill="none" stroke="#c9c9c9" stroke-width="1.5"/><rect x="300.6" y="1053" width="14.8" height="14.8" rx="2.5" fill="none" stroke="#c9c9c9" stroke-width="1.6"/><path d="M334,170 h12 v4 h-8 v8 h-4 z" fill="#5c8fa0"/><path d="M378,170 h-12 v4 h8 v8 h4 z" fill="#5c8fa0"/><path d="M334,226 h12 v-4 h-8 v-8 h-4 z" fill="#5c8fa0"/><path d="M378,226 h-12 v-4 h8 v-8 h4 z" fill="#5c8fa0"/><path d="M334,230 h12 v2 h-10 v10 h-2 z" fill="#d9d9d9"/><path d="M378,230 h-8 v2 h6 v10 h2 z" fill="#d9d9d9"/><rect x="346" y="230" width="2" height="2" fill="#d9d9d9"/><rect x="350" y="230" width="2" height="2" fill="#d9d9d9"/><rect x="354" y="230" width="2" height="2" fill="#d9d9d9"/><rect x="358" y="230" width="2" height="2" fill="#d9d9d9"/><rect x="362" y="230" width="2" height="2" fill="#d9d9d9"/><rect x="366" y="230" width="2" height="2" fill="#d9d9d9"/><rect x="334" y="242" width="2" height="2" fill="#d9d9d9"/><rect x="376" y="242" width="2" height="2" fill="#d9d9d9"/><rect x="334" y="246" width="2" height="2" fill="#d9d9d9"/><rect x="376" y="246" width="2" height="2" fill="#d9d9d9"/><rect x="334" y="250" width="2" height="2" fill="#d9d9d9"/><rect x="376" y="250" width="2" height="2" fill="#d9d9d9"/><rect x="334" y="254" width="2" height="2" fill="#d9d9d9"/><rect x="376" y="254" width="2" height="2" fill="#d9d9d9"/><rect x="334" y="258" width="2" height="2" fill="#d9d9d9"/><rect x="376" y="258" width="2" height="2" fill="#d9d9d9"/><rect x="334" y="262" width="2" height="2" fill="#d9d9d9"/><rect x="376" y="262" width="2" height="2" fill="#d9d9d9"/><rect x="334" y="266" width="2" height="2" fill="#d9d9d9"/><rect x="376" y="266" width="2" height="2" fill="#d9d9d9"/><rect x="334" y="270" width="2" height="2" fill="#d9d9d9"/><rect x="376" y="270" width="2" height="2" fill="#d9d9d9"/><rect x="334" y="274" width="2" height="2" fill="#d9d9d9"/><rect x="376" y="274" width="2" height="2" fill="#d9d9d9"/><rect x="334" y="278" width="2" height="2" fill="#d9d9d9"/><rect x="376" y="278" width="2" height="2" fill="#d9d9d9"/><rect x="334" y="282" width="2" height="2" fill="#d9d9d9"/><rect x="376" y="282" width="2" height="2" fill="#d9d9d9"/><path d="M334,274 v12 h8 v-2 h-6 v-10 z" fill="#d9d9d9"/><rect x="346" y="284" width="2" height="2" fill="#d9d9d9"/><rect x="350" y="284" width="2" height="2" fill="#d9d9d9"/><rect x="354" y="284" width="2" height="2" fill="#d9d9d9"/><rect x="358" y="284" width="2" height="2" fill="#d9d9d9"/><rect x="362" y="284" width="2" height="2" fill="#d9d9d9"/><rect x="366" y="284" width="2" height="2" fill="#d9d9d9"/><rect x="370" y="284" width="2" height="2" fill="#d9d9d9"/><rect x="374" y="284" width="2" height="2" fill="#d9d9d9"/></svg>
<div class="menu" style="left:351px;top:252px;width:438px;height:775px">
<div class="ic" style="width:43px"></div><div class="vl" style="left:43px"></div>
<div class="mi" style="left:55px;top:9px">Cut</div>
<div class="sc" style="left:377px;top:9px"><b>⌘</b> X</div>
<div class="mi" style="left:55px;top:45px">Copy</div>
<div class="sc" style="left:377px;top:45px"><b>⌘</b> C</div>
<div class="mi d" style="left:55px;top:81px">Paste</div>
<div class="sc d" style="left:377px;top:81px"><b>⌘</b> V</div>
<div class="mi d" style="left:55px;top:117px">Insert Paste</div>
<div class="sep" style="left:51px;width:380px;top:160px"></div>
<div class="mi" style="left:55px;top:169px">Clear</div>
<div class="mi" style="left:55px;top:205px">Duplicate</div>
<div class="sep" style="left:51px;width:380px;top:248px"></div>
<div class="mi" style="left:55px;top:257px">Mute</div>
<div class="mi d" style="left:55px;top:293px">Set Slot Color...</div>
<div class="sep" style="left:51px;width:380px;top:336px"></div>
<div class="mi" style="left:55px;top:345px">Create Alias</div>
<div class="sc" style="left:377px;top:345px"><b>⌘</b> P</div>
<div class="mi d" style="left:55px;top:381px">Un-alias</div>
<div class="sep" style="left:51px;width:380px;top:424px"></div>
<div class="mi" style="left:55px;top:433px">Track</div>
<div class="mi" style="left:55px;top:469px">Pattern</div>
<div class="sep" style="left:51px;width:380px;top:512px"></div>
<div class="mi" style="left:55px;top:521px">Clear All Muted Slots</div>
<div class="sep" style="left:51px;width:380px;top:564px"></div>
<div class="hl" style="left:7.100000000000023px;width:423.5px;top:572.4px"></div>
<div class="mi h" style="left:55px;top:573px">∿ Paketti..</div>
<div class="sep" style="left:51px;width:380px;top:616px"></div>
<div class="mi" style="left:55px;top:625px">Show Track Names</div>
<div class="mi" style="left:55px;top:661px;word-spacing:-0.6px">Show Track Meters</div>
<div class="mi" style="left:55px;top:697px">Show Track Colors</div>
<div class="mi" style="left:55px;top:733px;word-spacing:0.5px">Show Identical Repeated Slots</div>
<svg class="a" style="left:0;top:0" width="438" height="775" viewBox="0 0 438 775"><polygon points="417,442.9 417,455.3 426,449.1" fill="#f2f2f2"/><polygon points="417,478.9 417,491.3 426,485.1" fill="#f2f2f2"/><polygon points="417,582.9 417,595.3 426,589.1" fill="#000"/><polyline points="13.6,643.3 18.3,648.2 28.8,637.3" fill="none" stroke="#f4f4f4" stroke-width="2.9"/><polyline points="13.6,679.3 18.3,684.2 28.8,673.3" fill="none" stroke="#f4f4f4" stroke-width="2.9"/><polyline points="13.6,715.3 18.3,720.2 28.8,709.3" fill="none" stroke="#f4f4f4" stroke-width="2.9"/></svg>
</div>
<div class="menu" style="left:789px;top:11px;width:771px;height:1090px">
<div class="ic" style="width:43.5px"></div><div class="vl" style="left:43.5px"></div>
<div class="a" style="left:748px;top:0;height:594px;right:0;background:rgba(255,255,255,0.02)"></div>
<div class="mi" style="left:55.200000000000045px;top:8px">∿ Automation Curves..</div>
<div class="mi" style="left:55.200000000000045px;top:44px">∿ Delay Output..</div>
<div class="mi" style="left:55.200000000000045px;top:80px;word-spacing:-1.0px">∿ Record..</div>
<div class="sep" style="left:51px;width:712px;top:123px"></div>
<div class="mi" style="left:55.200000000000045px;top:132px">∿ Paketti Beat Structure Editor...</div>
<div class="sep" style="left:51px;width:712px;top:175px"></div>
<div class="mi" style="left:55.200000000000045px;top:184px">∿ Clone Current Sequence</div>
<div class="mi" style="left:55.200000000000045px;top:220px;word-spacing:0.75px">∿ Clone Sequence (With Automation)</div>
<div class="mi" style="left:55.200000000000045px;top:256px;word-spacing:0.5px">∿ Clone Pattern (Without Automation)</div>
<div class="sep" style="left:51px;width:712px;top:299px"></div>
<div class="mi" style="left:55.200000000000045px;top:308px;word-spacing:-0.3px">∿ Clone and Expand Pattern to LPB*2</div>
<div class="mi" style="left:55.200000000000045px;top:344px">∿ Clone and Shrink Pattern to LPB/2</div>
<div class="sep" style="left:51px;width:712px;top:387px"></div>
<div class="mi" style="left:55.200000000000045px;top:396px;word-spacing:-0.5px">∿ Duplicate Pattern Above &amp; Clear Muted</div>
<div class="mi" style="left:55.200000000000045px;top:432px">∿ Duplicate Pattern Below &amp; Clear Muted</div>
<div class="sep" style="left:51px;width:712px;top:475px"></div>
<div class="hl" style="left:7.2000000000000455px;width:755.3999999999999px;top:483.4px"></div>
<div class="mi h" style="left:55.200000000000045px;top:484px">∿ Duplicate Track and Instrument</div>
<div class="sep" style="left:51px;width:712px;top:527px"></div>
<div class="mi" style="left:55.200000000000045px;top:536px;word-spacing:1.0px">∿ Switch to Automation</div>
<div class="sep" style="left:51px;width:712px;top:579px"></div>
<div class="mi" style="left:55.200000000000045px;top:588px">∿ Bypass EFX (Write to Pattern)</div>
<div class="mi" style="left:55.200000000000045px;top:624px">∿ Enable EFX (Write to Pattern)</div>
<div class="sep" style="left:51px;width:712px;top:667px"></div>
<div class="mi" style="left:55.200000000000045px;top:676px;word-spacing:-0.4px">∿ Bypass All Devices on Channel</div>
<div class="mi" style="left:55.200000000000045px;top:712px">∿ Enable All Devices on Channel</div>
<div class="sep" style="left:51px;width:712px;top:755px"></div>
<div class="mi" style="left:55.200000000000045px;top:764px">∿ Play at 75% Speed (Song BPM)</div>
<div class="mi" style="left:55.200000000000045px;top:800px">∿ Play at 100% Speed (Song BPM)</div>
<div class="mi" style="left:55.200000000000045px;top:836px">∿ Show Paketti KeyBindings...</div>
<div class="mi" style="left:55.200000000000045px;top:872px">∿ Show Renoise KeyBindings...</div>
<div class="sep" style="left:51px;width:712px;top:915px"></div>
<div class="mi" style="left:55.200000000000045px;top:924px">∿ Toggle Automatically Open Selected Track Device Editors ON/OFF</div>
<div class="sep" style="left:51px;width:712px;top:967px"></div>
<div class="mi" style="left:55.200000000000045px;top:976px;word-spacing:-0.45px">∿ Insert Stereo -&gt; Mono device to End of ALL DSP Chains</div>
<div class="sep" style="left:51px;width:712px;top:1019px"></div>
<div class="mi" style="left:55.200000000000045px;top:1028px">∿ Selection in Pattern Matrix to Group</div>
<svg class="a" style="left:0;top:0" width="771" height="1090" viewBox="0 0 771 1090"><polygon points="749,17.9 749,30.3 758,24.1" fill="#f2f2f2"/><polygon points="749,53.9 749,66.3 758,60.1" fill="#f2f2f2"/><polygon points="749,89.9 749,102.3 758,96.1" fill="#f2f2f2"/></svg>
</div>
</div></body></html>
